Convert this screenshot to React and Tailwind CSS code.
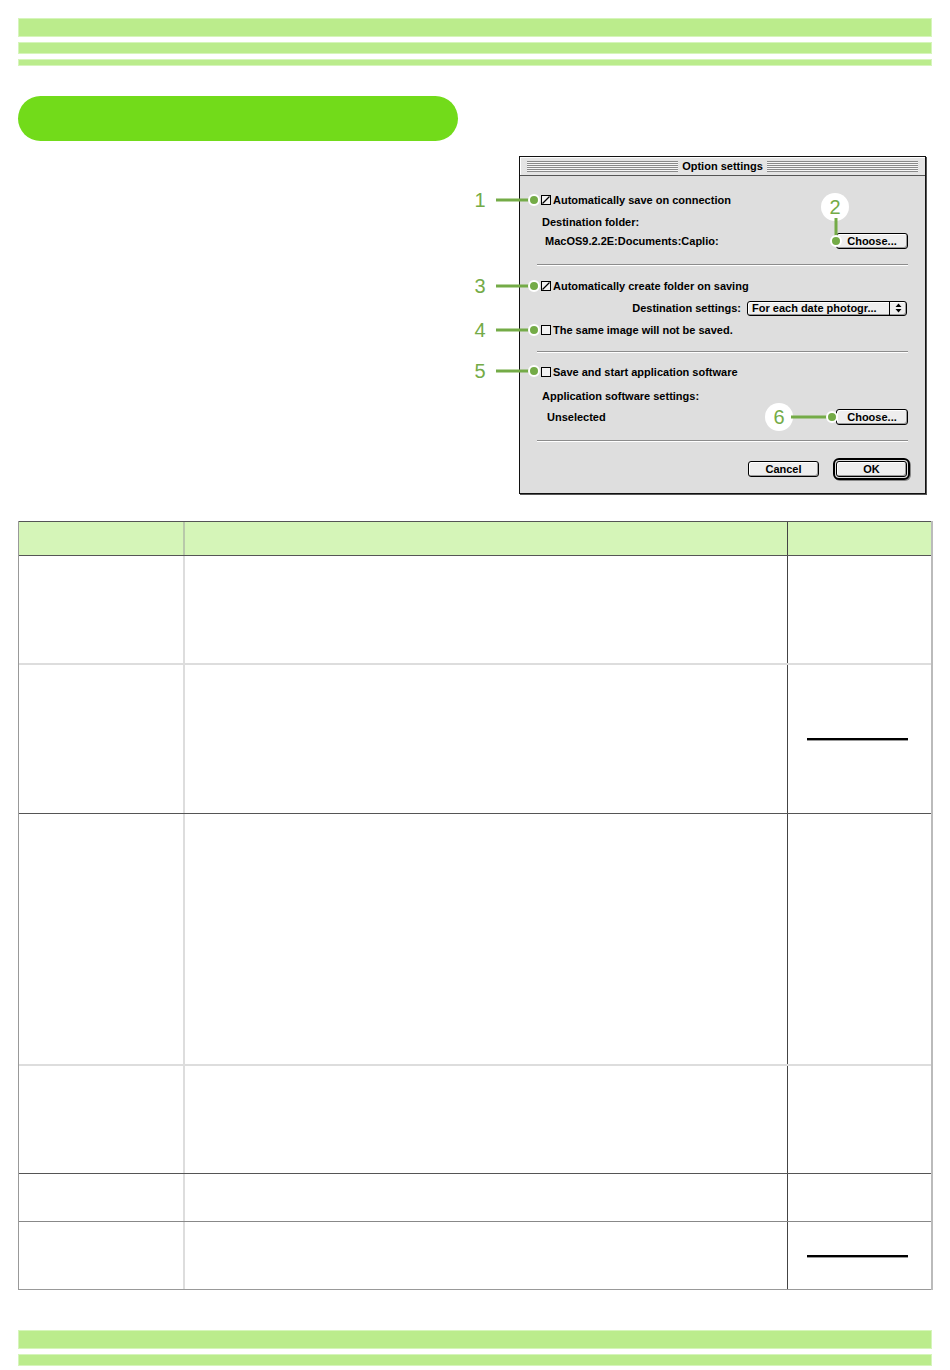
import React from "react";

const GREEN = "#74ab47";

const rows = [
  { h: "h-[109px]", border: "border-b-2 border-b-[#dddddd]", line: false },
  { h: "h-[149px]", border: "border-b border-b-[#555555]", line: true },
  { h: "h-[252px]", border: "border-b-2 border-b-[#dddddd]", line: false },
  { h: "h-[108px]", border: "border-b border-b-[#555555]", line: false },
  { h: "h-[48px]", border: "border-b border-b-[#888888]", line: false },
  { h: "h-[68px]", border: "border-b border-b-[#999999]", line: true },
];

function CheckBox({ checked }) {
  return (
    <span className="relative inline-block w-[10px] h-[10px] border border-black bg-[#f2f2f2] shrink-0">
      {checked && (
        <svg className="absolute left-0 top-0" width="8" height="8" viewBox="0 0 8 8">
          <path d="M7.5 0.5 L0.5 7.5" stroke="#000" strokeWidth="1.3" />
        </svg>
      )}
    </span>
  );
}

function MacButton({ children, className = "" }) {
  return (
    <div
      className={
        "flex items-center justify-center border border-black rounded-[3px] bg-[#eeeeee] shadow-[inset_-1px_-1px_0_#9a9a9a,inset_1px_1px_0_#ffffff] text-[11px] font-bold text-black " +
        className
      }
    >
      {children}
    </div>
  );
}

function Separator({ className = "" }) {
  return <div className={"h-[2px] border-t border-t-[#8c8c8c] border-b border-b-white " + className} />;
}

function Callouts() {
  const dot = (x, y) => <circle cx={x} cy={y} r="5" fill={GREEN} stroke="#fff" strokeWidth="2" />;
  const num = (x, y, n) => (
    <text
      x={x}
      y={y}
      fill={GREEN}
      fontSize="20"
      fontFamily="'Liberation Sans', Arial, sans-serif"
      textAnchor="middle"
      dominantBaseline="central"
    >
      {n}
    </text>
  );
  const left = (y, n) => (
    <g key={n}>
      {num(21, y, n)}
      <line x1="37" y1={y} x2="75" y2={y} stroke={GREEN} strokeWidth="3" />
      {dot(75, y)}
    </g>
  );
  return (
    <svg className="absolute left-[-60px] top-0 pointer-events-none" width="470" height="338" viewBox="0 0 470 338">
      {left(44, "1")}
      {left(130, "3")}
      {left(174, "4")}
      {left(215, "5")}
      {/* 2 */}
      <circle cx="376" cy="51" r="14" fill="#fff" />
      {num(376, 51, "2")}
      <line x1="377" y1="62" x2="377" y2="85" stroke={GREEN} strokeWidth="3" />
      {dot(377, 85)}
      {/* 6 */}
      <circle cx="320" cy="261" r="14" fill="#fff" />
      {num(320, 261, "6")}
      <line x1="332" y1="261" x2="373" y2="261" stroke={GREEN} strokeWidth="3" />
      {dot(373, 261)}
    </svg>
  );
}

function OptionDialog() {
  return (
    <div className="relative ml-auto mr-[6px] mt-[60px]">
      <div className="w-[407px] h-[338px] border border-[#111111] shadow-[1px_1px_0_#555555] bg-[#dedede] flex flex-col text-[11px] font-bold text-black">
        {/* title bar */}
        <div className="h-[19px] flex items-center gap-[4px] px-[7px] border-b border-b-[#555555] bg-[#e4e4e4] shadow-[inset_1px_1px_0_#ffffff]">
          <div className="flex-1 h-[11px] bg-[image:repeating-linear-gradient(to_bottom,#8a8a8a_0px,#8a8a8a_1px,#f6f6f6_1px,#f6f6f6_2px)]" />
          <span className="leading-none">Option settings</span>
          <div className="flex-1 h-[11px] bg-[image:repeating-linear-gradient(to_bottom,#8a8a8a_0px,#8a8a8a_1px,#f6f6f6_1px,#f6f6f6_2px)]" />
        </div>

        <div className="flex-1 flex flex-col pl-[17px] pr-[17px] pt-[16px]">
          <div className="h-[16px] flex items-center gap-[2px] pl-[4px]">
            <CheckBox checked />
            <span>Automatically save on connection</span>
          </div>
          <div className="h-[16px] mt-[6px] flex items-center pl-[5px]">Destination folder:</div>
          <div className="h-[16px] mt-[3px] flex items-center justify-between pl-[8px]">
            <span>MacOS9.2.2E:Documents:Caplio:</span>
            <MacButton className="w-[72px] h-[16px]">Choose...</MacButton>
          </div>
          <Separator className="mt-[15px]" />

          <div className="h-[16px] mt-[12px] flex items-center gap-[2px] pl-[4px]">
            <CheckBox checked />
            <span>Automatically create folder on saving</span>
          </div>
          <div className="h-[16px] mt-[6px] flex items-center justify-end gap-[6px] pr-[1px]">
            <span>Destination settings:</span>
            <div className="w-[160px] h-[15px] flex items-center border border-black rounded-[3px] bg-[#eeeeee] shadow-[inset_-1px_-1px_0_#9a9a9a,inset_1px_1px_0_#ffffff]">
              <span className="flex-1 pl-[4px] font-bold">For each date photogr...</span>
              <div className="w-[17px] h-full border-l border-l-black flex items-center justify-center">
                <svg width="7" height="10" viewBox="0 0 7 10">
                  <path d="M3.5 0.5 L6.5 4 L0.5 4 Z M3.5 9.5 L6.5 6 L0.5 6 Z" fill="#000" />
                </svg>
              </div>
            </div>
          </div>
          <div className="h-[16px] mt-[6px] flex items-center gap-[2px] pl-[4px]">
            <CheckBox />
            <span>The same image will not be saved.</span>
          </div>
          <Separator className="mt-[13px]" />

          <div className="h-[16px] mt-[11px] flex items-center gap-[2px] pl-[4px]">
            <CheckBox />
            <span>Save and start application software</span>
          </div>
          <div className="h-[16px] mt-[8px] flex items-center pl-[5px]">Application software settings:</div>
          <div className="h-[16px] mt-[5px] flex items-center justify-between pl-[10px]">
            <span>Unselected</span>
            <MacButton className="w-[72px] h-[16px]">Choose...</MacButton>
          </div>
          <Separator className="mt-[15px]" />

          <div className="h-[22px] mt-[16px] flex items-center justify-end gap-[14px] -mr-[2px]">
            <MacButton className="w-[71px] h-[16px]">Cancel</MacButton>
            <div className="w-[77px] h-[22px] border-[2px] border-black rounded-[6px] p-[1px] bg-[#dedede] shadow-[1px_1px_0_#888888]">
              <MacButton className="w-full h-full">OK</MacButton>
            </div>
          </div>
        </div>
      </div>
      <Callouts />
    </div>
  );
}

function GreenBar({ className = "" }) {
  return <div className={"bg-[#bbec8c] border border-[#d6f5bb] " + className} />;
}

export default function App() {
  return (
    <div className="w-[950px] min-h-[1370px] bg-white px-[18px] pt-[18px] font-['Liberation_Sans',Arial,sans-serif]">
      {/* top bars */}
      <div className="flex flex-col gap-[5px]">
        <GreenBar className="h-[19px]" />
        <GreenBar className="h-[12px]" />
        <GreenBar className="h-[7px]" />
      </div>

      {/* pill + dialog */}
      <div className="flex items-start mt-[30px]">
        <div className="w-[440px] h-[45px] rounded-full bg-[#72db1a]" />
        <OptionDialog />
      </div>

      {/* table */}
      <div className="mt-[27px] w-[915px] border-l border-l-[#999999] border-r-2 border-r-[#bbbbbb]">
        <div className="h-[35px] flex bg-[#d5f5b8] border-t border-t-[#555555] border-b border-b-[#555555]">
          <div className="w-[166px] border-r-2 border-r-[#b8c8aa]" />
          <div className="flex-1 border-r border-r-[#444444]" />
          <div className="w-[143px]" />
        </div>
        {rows.map((r, i) => (
          <div key={i} className={"flex " + r.h + " " + r.border}>
            <div className="w-[166px] border-r-2 border-r-[#dddddd]" />
            <div className="flex-1 border-r border-r-[#444444]" />
            <div className="w-[143px] flex items-center pl-[19px]">
              {r.line && <div className="w-[101px] h-[2px] bg-black shadow-[0_1px_0_#999999]" />}
            </div>
          </div>
        ))}
      </div>

      {/* bottom bars */}
      <div className="mt-[40px] flex flex-col gap-[5px]">
        <GreenBar className="h-[19px]" />
        <GreenBar className="h-[12px]" />
      </div>
    </div>
  );
}
